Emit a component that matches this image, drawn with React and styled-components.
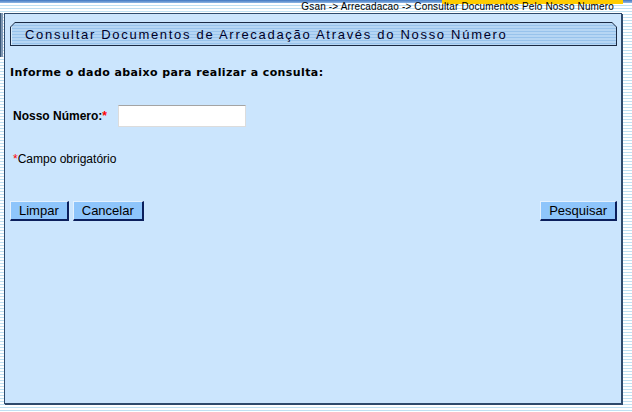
import React from 'react';
import styled, { createGlobalStyle } from 'styled-components';

const GlobalStyle = createGlobalStyle`
  html, body {
    margin: 0;
    padding: 0;
  }
  body {
    width: 632px;
    height: 412px;
    overflow: hidden;
    font-family: 'Liberation Sans', Arial, sans-serif;
    background: repeating-linear-gradient(
      to bottom,
      #ffffff 0px,
      #ffffff 2px,
      #bfe0f2 2px,
      #bfe0f2 3px
    );
  }
`;

const App = () => {
  return (
    <>
      <GlobalStyle />
      <Page>
        <Header>
          <TopStrip>
            <YellowBar />
          </TopStrip>
          <Breadcrumb>Gsan -&gt; Arrecadacao -&gt; Consultar Documentos Pelo Nosso Numero</Breadcrumb>
        </Header>
        <Body>
          <Gutter>
            <GutterMark />
          </Gutter>
          <Panel>
            <TitleTab>
              <TitleInner>Consultar Documentos de Arrecadação Através do Nosso Número</TitleInner>
            </TitleTab>
            <Intro>Informe o dado abaixo para realizar a consulta:</Intro>
            <FieldRow>
              <Label>
                Nosso Número:<Required>*</Required>
              </Label>
              <TextInput type='text' />
            </FieldRow>
            <Note>
              <Required>*</Required>Campo obrigatório
            </Note>
            <ButtonRow>
              <ButtonGroup>
                <Button>Limpar</Button>
                <Button>Cancelar</Button>
              </ButtonGroup>
              <Button>Pesquisar</Button>
            </ButtonRow>
          </Panel>
        </Body>
      </Page>
    </>
  );
};

export default App;

//Styles

const Page = styled.div`
  display: flex;
  flex-direction: column;
  width: 632px;
`;

const Header = styled.div`
  height: 13px;
  display: flex;
  flex-direction: column;
`;

const TopStrip = styled.div`
  height: 3px;
  display: flex;
  justify-content: flex-end;
  background: linear-gradient(to bottom, #3f76c0, #8fb6e4);
`;

const YellowBar = styled.div`
  width: 181px;
  height: 4px;
  margin-right: 9px;
  background: #ffcc00;
`;

const Breadcrumb = styled.div`
  margin-top: -2px;
  align-self: flex-end;
  margin-right: 18px;
  font-size: 10px;
  line-height: 11px;
  letter-spacing: 0.15px;
  color: #000;
`;

const Body = styled.div`
  display: flex;
  align-items: flex-start;
`;

const Gutter = styled.div`
  width: 4px;
  display: flex;
`;

const GutterMark = styled.div`
  width: 2px;
  height: 44px;
  background: #7f97b3;
  border-left: 1px solid #3a5878;
`;

const Panel = styled.div`
  width: 618px;
  height: 391px;
  background: #cbe5fd;
  border: 1px solid #2e4a6c;
  box-shadow: 1px 1px 0 #2e4a6c;
  padding: 8px 4px 0 5px;
  box-sizing: border-box;
  display: flex;
  flex-direction: column;
`;

const TitleTab = styled.div`
  height: 24px;
  padding: 1px;
  box-sizing: border-box;
  background: #1a2a44;
  clip-path: polygon(5px 0, calc(100% - 5px) 0, 100% 5px, 100% 100%, 0 100%, 0 5px);
`;

const TitleInner = styled.div`
  height: 100%;
  display: flex;
  align-items: center;
  padding-left: 13px;
  padding-top: 1px;
  box-sizing: border-box;
  border-left: 1px solid #d9ecfc;
  clip-path: polygon(4px 0, calc(100% - 4px) 0, 100% 4px, 100% 100%, 0 100%, 0 4px);
  background: repeating-linear-gradient(
    to bottom,
    #b6d6f4 0px,
    #b6d6f4 2px,
    #98c3ec 2px,
    #98c3ec 3px
  );
  font-size: 13px;
  letter-spacing: 1.7px;
  color: #000028;
  white-space: nowrap;
`;

const Intro = styled.div`
  margin-top: 20px;
  font-family: 'DejaVu Sans', Verdana, sans-serif;
  font-weight: bold;
  font-size: 11px;
  line-height: 14px;
  letter-spacing: 0.4px;
  color: #000;
`;

const FieldRow = styled.div`
  margin-top: 25px;
  display: flex;
  align-items: center;
  padding-left: 3px;
`;

const Label = styled.div`
  width: 105px;
  font-weight: bold;
  font-size: 12px;
  color: #000;
`;

const Required = styled.span`
  color: #ff0000;
`;

const TextInput = styled.input`
  width: 128px;
  height: 22px;
  box-sizing: border-box;
  margin: 0;
  border: 1px solid #dcdcdc;
  border-top-color: #a4a4a4;
  background: #fff;
  outline: none;
`;

const Note = styled.div`
  margin-top: 25px;
  padding-left: 3px;
  font-size: 12px;
  line-height: 14px;
  color: #000;
`;

const ButtonRow = styled.div`
  margin-top: 35px;
  display: flex;
  justify-content: space-between;
`;

const ButtonGroup = styled.div`
  display: flex;
  gap: 4px;
`;

const Button = styled.button`
  height: 20px;
  padding: 0 8px;
  margin: 0;
  box-sizing: border-box;
  background: #8ec5fb;
  border: 1px solid #e4f1fe;
  border-right: 2px solid #0b1f5c;
  border-bottom: 2px solid #0b1f5c;
  font-family: 'Liberation Sans', Arial, sans-serif;
  font-size: 13px;
  line-height: 16px;
  color: #000;
  cursor: pointer;
`;
